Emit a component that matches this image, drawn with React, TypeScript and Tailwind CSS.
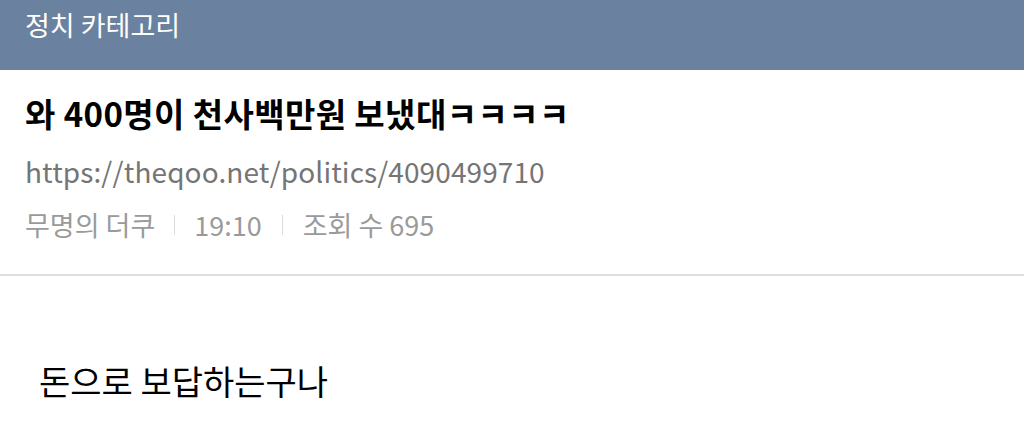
export default function App() {
  const font = { fontFamily: '"Noto Sans CJK KR", "Noto Sans", sans-serif' };
  return (
    <div className="w-[1024px] h-[442px] bg-white overflow-hidden" style={font}>
      <div className="h-[70px] bg-[#6a819f] px-[25px] pt-[5px]">
        <div className="text-white text-[27px] leading-[40px]">정치 카테고리</div>
      </div>
      <div className="px-[25px] pt-[21px] pb-[31px] border-b-2 border-[#dedede]">
        <div className="text-[33px] font-bold text-black leading-[44px] tracking-[0.4px]">와 400명이 천사백만원 보냈대ㅋㅋㅋㅋ</div>
        <div className="mt-[16px] text-[28px] text-[#757575] leading-[40px] tracking-[0.1px]">https://theqoo.net/politics/4090499710</div>
        <div className="mt-[16px] flex items-center text-[27px] text-[#9a9a9a] leading-[36px]">
          <span>무명의 더쿠</span>
          <span className="mx-[19px] w-px h-[20px] bg-[#dcdcdc]" />
          <span>19:10</span>
          <span className="mx-[20px] w-px h-[20px] bg-[#dcdcdc]" />
          <span>조회 수 695</span>
        </div>
      </div>
      <div className="px-[39px] pt-[83px] text-[34px] text-black leading-[44px]">돈으로 보답하는구나</div>
    </div>
  );
}
